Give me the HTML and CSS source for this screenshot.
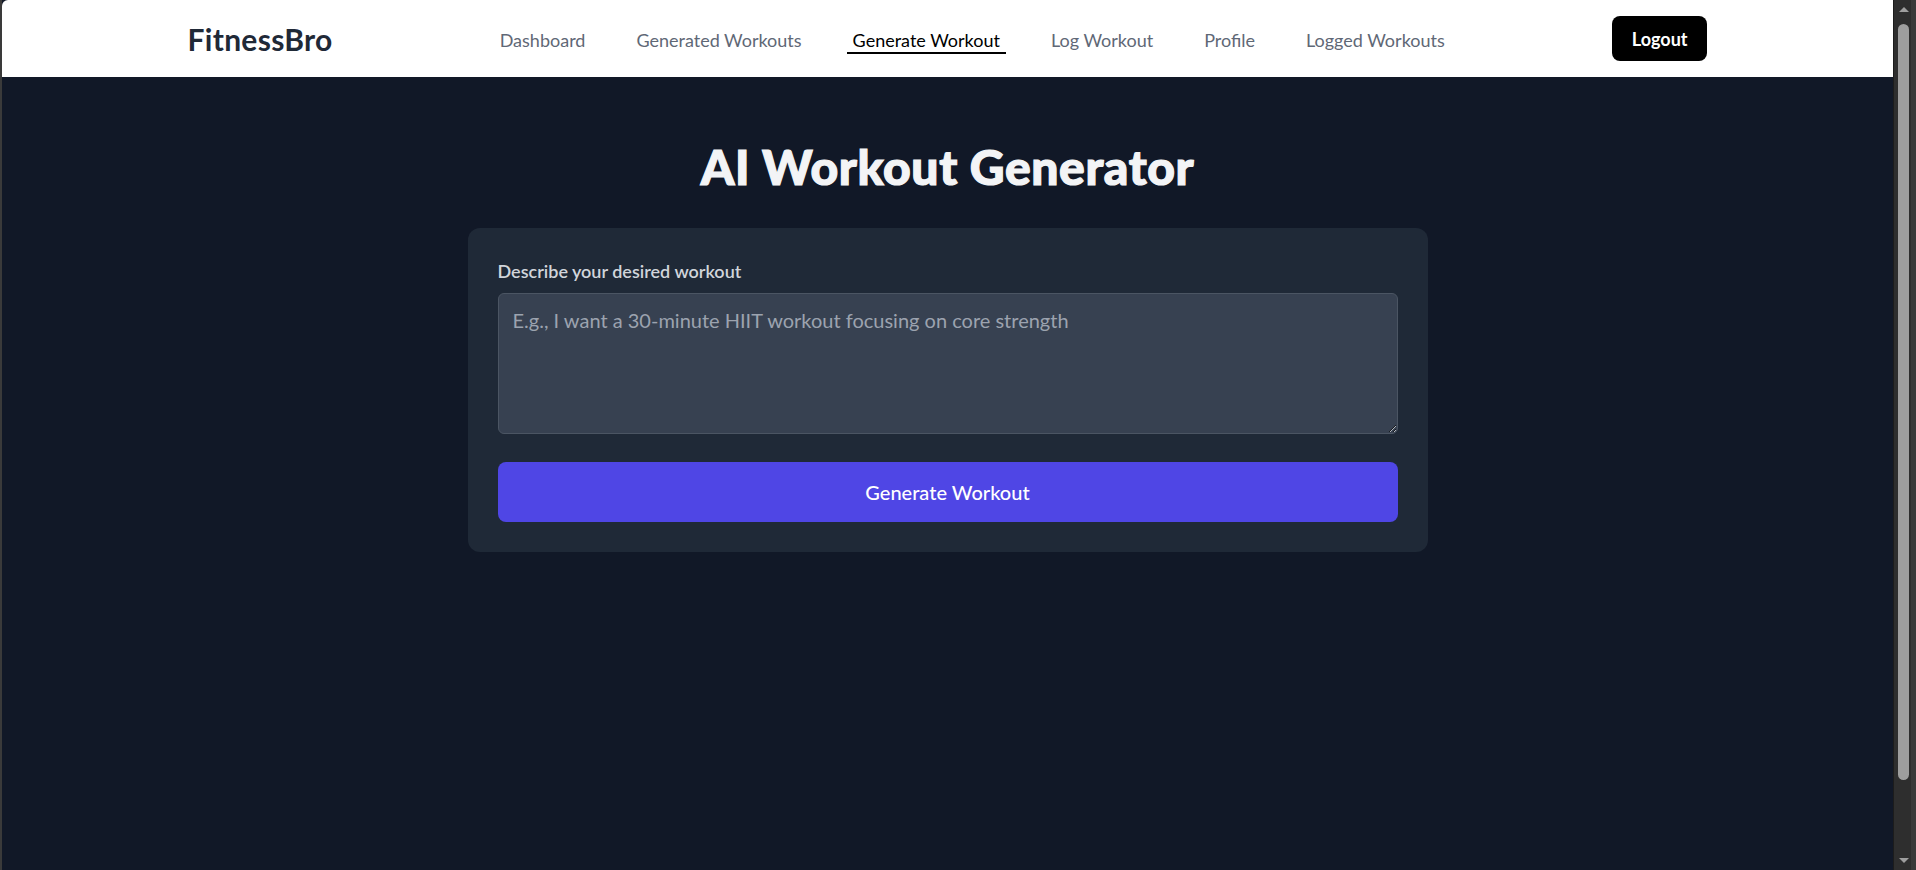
FILE: index.html
```html
<!DOCTYPE html>
<html lang="en">
<head>
<meta charset="utf-8">
<title>FitnessBro - Generate Workout</title>
<link rel="stylesheet" href="styles.css">
</head>
<body>
<div class="window">
  <div class="frame-edge"></div>
  <div class="app">
    <header class="topbar">
      <div class="topbar-inner">
        <a class="logo" href="#">FitnessBro</a>
        <nav class="nav">
          <a class="nav-link" href="#">Dashboard</a>
          <a class="nav-link" href="#">Generated Workouts</a>
          <a class="nav-link active" href="#">Generate Workout</a>
          <a class="nav-link" href="#">Log Workout</a>
          <a class="nav-link" href="#">Profile</a>
          <a class="nav-link" href="#">Logged Workouts</a>
        </nav>
        <button class="logout" type="button">Logout</button>
      </div>
    </header>
    <main class="main">
      <h1 class="title">AI Workout Generator</h1>
      <section class="card">
        <label class="label" for="desc">Describe your desired workout</label>
        <textarea id="desc" class="input" placeholder="E.g., I want a 30-minute HIIT workout focusing on core strength"></textarea>
        <button class="generate" type="button">Generate Workout</button>
      </section>
    </main>
  </div>
  <div class="scrollbar">
    <div class="arrow-up"></div>
    <div class="thumb"></div>
    <div class="spacer"></div>
    <div class="arrow-down"></div>
  </div>
</div>
</body>
</html>
```
FILE: styles.css
```css
* { box-sizing: border-box; }
html, body { margin: 0; padding: 0; height: 100%; }
body {
  font-family: Lato, "Noto Sans", sans-serif;
  background: #111827;
  overflow: hidden;
}
.window {
  display: flex;
  height: 870px;
}
.frame-edge {
  width: 2px;
  background: #3a3a3a;
  flex: none;
}
.app {
  flex: 1;
  min-width: 0;
  background: #111827;
  display: flex;
  flex-direction: column;
}
.topbar {
  background: #ffffff;
  height: 77px;
  flex: none;
  border-top-left-radius: 6px;
}
.topbar-inner {
  max-width: 1520px;
  height: 100%;
  margin: 0 auto;
  display: flex;
  align-items: center;
  justify-content: space-between;
}
.logo {
  font-size: 30px;
  line-height: 36px;
  font-weight: 700;
  letter-spacing: 0.3px;
  color: #1f2937;
  text-decoration: none;
}
.nav {
  display: flex;
  align-items: center;
  gap: 39px;
}
.nav-link {
  font-size: 18px;
  line-height: 24px;
  padding: 5px 6px 0;
  color: #5f6876;
  text-decoration: none;
  border-bottom: 2px solid transparent;
}
.nav-link.active {
  color: #000000;
  border-bottom-color: #000000;
}
.logout {
  font-family: inherit;
  font-size: 18px;
  line-height: 29px;
  font-weight: 700;
  color: #ffffff;
  background: #000000;
  border: none;
  border-radius: 8px;
  padding: 9px 20px 7px;
}
.main {
  flex: 1;
  padding-top: 66px;
}
.title {
  margin: 0 0 37px;
  text-align: center;
  font-size: 48px;
  line-height: 48px;
  font-weight: 900;
  letter-spacing: 0.6px;
  -webkit-text-stroke: 1.2px #f3f4f6;
  color: #f3f4f6;
}
.card {
  width: 960px;
  margin: 0 auto;
  background: #1f2937;
  border-radius: 12px;
  padding: 29px 30px 30px;
  display: flex;
  flex-direction: column;
}
.label {
  font-size: 18px;
  line-height: 28px;
  font-weight: 600;
  color: #d1d5db;
  margin-bottom: 8px;
}
.input {
  display: block;
  width: 100%;
  height: 141px;
  background: #374151;
  border: 1px solid #4b5563;
  border-radius: 6px;
  padding: 12px 14px;
  font-family: inherit;
  font-size: 20px;
  line-height: 28px;
  color: #f3f4f6;
  outline: none;
}
.input::placeholder { color: #9ca3af; }
.generate {
  margin-top: 28px;
  height: 60px;
  width: 100%;
  border: none;
  border-radius: 8px;
  background: #4f46e5;
  color: #ffffff;
  font-family: inherit;
  font-size: 20px;
  font-weight: 500;
}
.scrollbar {
  width: 23px;
  flex: none;
  background: #2e2e2e;
  border-left: 1px solid #1c1c1c;
  border-right: 5px solid #3a3a3a;
  padding: 7px 2px 7px 4px;
  display: flex;
  flex-direction: column;
  align-items: flex-start;
}
.arrow-up, .arrow-down {
  width: 0;
  height: 0;
  margin-left: 1px;
  border-left: 5px solid transparent;
  border-right: 5px solid transparent;
}
.arrow-up { border-bottom: 5px solid #9e9e9e; }
.arrow-down { border-top: 5px solid #9e9e9e; }
.thumb {
  margin-top: 12px;
  width: 11px;
  height: 756px;
  border-radius: 6px;
  background: #9e9e9e;
}
.spacer { flex: 1; }
```
